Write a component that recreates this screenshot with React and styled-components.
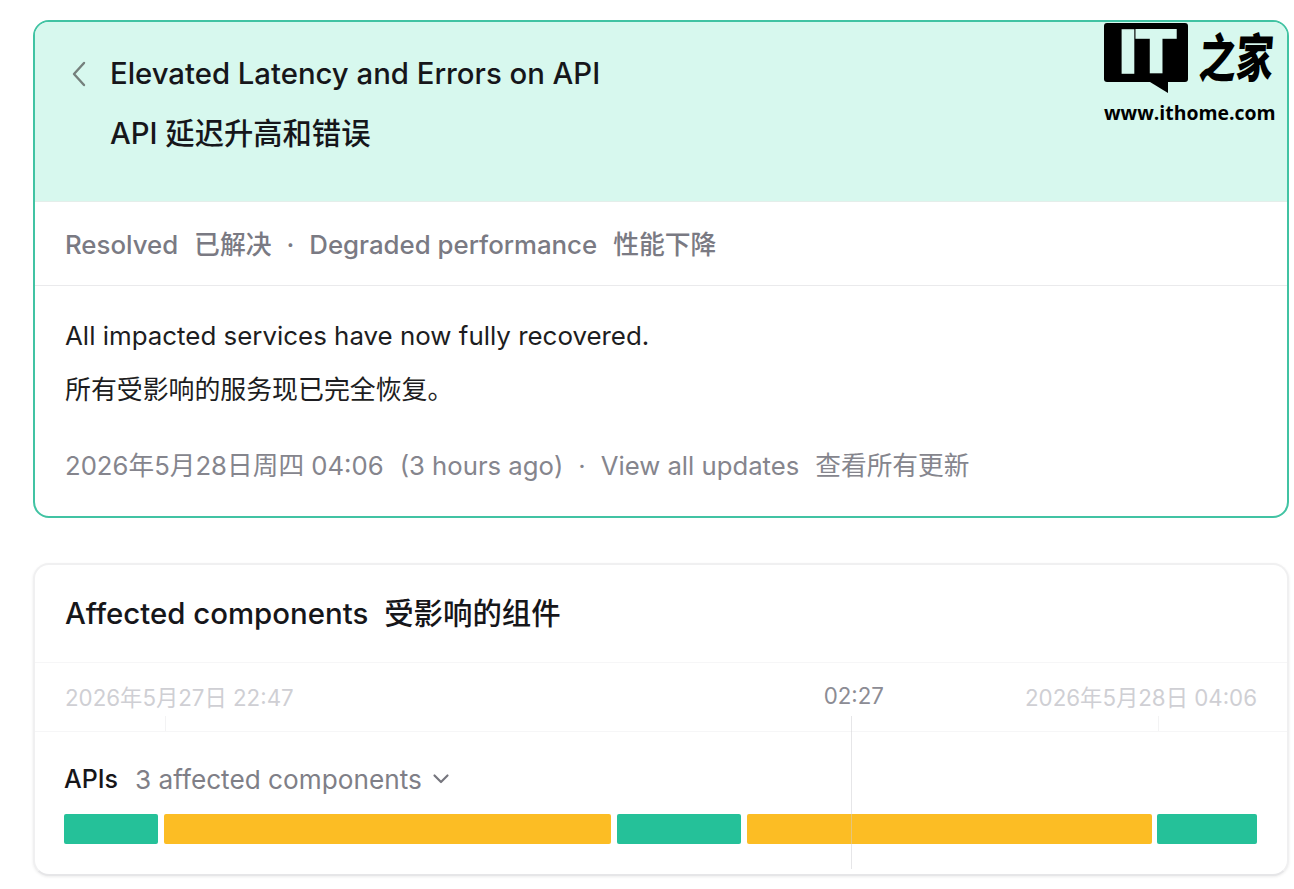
import styled, { createGlobalStyle } from "styled-components"

const GlobalStyle = createGlobalStyle`
    html, body {
        margin: 0;
        padding: 0;
        background: #fff;
    }
    body {
        font-family: Inter, "Noto Sans CJK SC", sans-serif;
    }
`

const bars = [
    { color: "#25c199", width: 94 },
    { color: "#fcbd24", width: 447 },
    { color: "#25c199", width: 124 },
    { color: "#fcbd24", width: 405 },
    { color: "#25c199", width: 100 },
]

function App() {
    return (
        <Page>
            <GlobalStyle />
            <IncidentCard>
                <Header>
                    <TitleRow>
                        <BackIcon width="16" height="26" viewBox="0 0 16 26" fill="none">
                            <path d="M13 2 L3 13 L13 24" stroke="#75807c" strokeWidth="2.4" strokeLinecap="round" strokeLinejoin="round" />
                        </BackIcon>
                        <Title>Elevated Latency and Errors on API</Title>
                    </TitleRow>
                    <SubTitle>API 延迟升高和错误</SubTitle>
                </Header>
                <StatusRow>
                    <span>Resolved</span>
                    <Zh>已解决</Zh>
                    <Dot>·</Dot>
                    <span>Degraded performance</span>
                    <Zh>性能下降</Zh>
                </StatusRow>
                <Body>
                    <Message>All impacted services have now fully recovered.</Message>
                    <Message $zh>所有受影响的服务现已完全恢复。</Message>
                    <MetaRow>
                        <span>2026年5月28日周四 04:06</span>
                        <Zh>(3 hours ago)</Zh>
                        <Dot>·</Dot>
                        <span>View all updates</span>
                        <Zh>查看所有更新</Zh>
                    </MetaRow>
                </Body>
            </IncidentCard>

            <ComponentsCard>
                <CardTitle>
                    <span>Affected components</span>
                    <Zh>受影响的组件</Zh>
                </CardTitle>
                <TimeRow>
                    <TimeLabel>2026年5月27日 22:47</TimeLabel>
                    <TimeLabel $current>02:27</TimeLabel>
                    <TimeLabel $end>2026年5月28日 04:06</TimeLabel>
                    <Tick $left={130} />
                    <Tick $left={1123} />
                </TimeRow>
                <GroupSection>
                    <GroupLabel>
                        <GroupName>APIs</GroupName>
                        <GroupCount>3 affected components</GroupCount>
                        <svg width="18" height="12" viewBox="0 0 18 12" fill="none">
                            <path d="M2.5 2.5 L9 9 L15.5 2.5" stroke="#76767e" strokeWidth="2.2" strokeLinecap="round" strokeLinejoin="round" />
                        </svg>
                    </GroupLabel>
                    <BarRow>
                        {bars.map((bar, index) => (
                            <Bar key={index} $color={bar.color} $width={bar.width} />
                        ))}
                    </BarRow>
                </GroupSection>
                <NowLine />
            </ComponentsCard>

            <Logo>
                <LogoTop>
                    <LogoBubble>IT</LogoBubble>
                    <LogoHan>之家</LogoHan>
                </LogoTop>
                <LogoUrl>www.ithome.com</LogoUrl>
            </Logo>
        </Page>
    )
}

export default App

const Page = styled.div`
    position: relative;
    box-sizing: border-box;
    width: 1294px;
    height: 889px;
    padding: 20px 5px 0 33px;
    overflow: hidden;
    color: #16161a;
    background: #fff;
`

const IncidentCard = styled.section`
    box-sizing: border-box;
    height: 498px;
    border: 2px solid #41c3a3;
    border-radius: 16px;
    overflow: hidden;
    background: #fff;
`

const Header = styled.header`
    box-sizing: border-box;
    height: 180px;
    padding: 28px 0 0 36px;
    background: #d7f8ee;
    border-bottom: 1px solid #e4eeea;
`

const TitleRow = styled.div`
    display: flex;
    align-items: center;
    gap: 23px;
    height: 48px;
`

const BackIcon = styled.svg`
    flex: none;
`

const Title = styled.h1`
    margin: 0;
    font-size: 29.3px;
    line-height: 48px;
    font-weight: 500;
    white-space: nowrap;
`

const SubTitle = styled.h2`
    margin: 12px 0 0 39px;
    font-size: 29.3px;
    line-height: 48px;
    font-weight: 500;
    white-space: nowrap;
`

const StatusRow = styled.div`
    box-sizing: border-box;
    height: 84px;
    padding: 0 30px;
    font-size: 25.8px;
    line-height: 85px;
    font-weight: 500;
    color: #7a7a83;
    border-bottom: 1px solid #eaeaec;
    white-space: nowrap;
`

const Zh = styled.span`
    margin-left: 16px;
`

const Dot = styled.span`
    margin: 0 15px;
`

const Body = styled.div`
    padding: 29px 30px 0;
`

const Message = styled.p`
    margin: ${props => (props.$zh ? "12px" : "0")} 0 0;
    font-size: 25.9px;
    line-height: 42px;
    color: #1d1d21;
`

const MetaRow = styled.div`
    margin-top: 34px;
    font-size: 25.7px;
    line-height: 42px;
    color: #85858d;
    white-space: nowrap;
`

const ComponentsCard = styled.section`
    position: relative;
    box-sizing: border-box;
    height: 313px;
    margin-top: 45px;
    border: 2px solid #f0f0f1;
    border-bottom-color: #e6e6e8;
    border-radius: 16px;
    overflow: hidden;
    background: #fff;
    box-shadow: 0 1px 3px rgba(0, 0, 0, 0.08);
`

const CardTitle = styled.h3`
    box-sizing: border-box;
    height: 98px;
    margin: 0;
    padding: 0 30px;
    font-size: 29.4px;
    line-height: 97px;
    font-weight: 500;
    white-space: nowrap;
    border-bottom: 1px solid #f6f6f7;
`

const TimeRow = styled.div`
    position: relative;
    display: flex;
    align-items: center;
    box-sizing: border-box;
    height: 69px;
    padding: 0 30px 3px;
    border-bottom: 1px solid #f6f6f7;
`

const TimeLabel = styled.span`
    margin-left: ${props => (props.$current ? "530px" : props.$end ? "auto" : "0")};
    font-size: 22.3px;
    color: ${props => (props.$current ? "#8c8c94" : "#cfcfd4")};
    white-space: nowrap;
`

const Tick = styled.i`
    position: absolute;
    left: ${props => props.$left}px;
    bottom: 0;
    width: 1px;
    height: 15px;
    background: #f3f3f4;
`

const GroupSection = styled.div`
    padding: 25px 29px 0;
`

const GroupLabel = styled.div`
    display: flex;
    align-items: center;
    gap: 10px;
    height: 44px;
    font-size: 26.2px;
    white-space: nowrap;
`

const GroupName = styled.span`
    font-size: 25px;
    font-weight: 500;
    margin-right: 7px;
`

const GroupCount = styled.span`
    color: #7f7f87;
`

const BarRow = styled.div`
    display: flex;
    gap: 6px;
    margin-top: 13px;
`

const Bar = styled.div`
    flex: none;
    width: ${props => props.$width}px;
    height: 30px;
    border-radius: 2px;
    background: ${props => props.$color};

    &:nth-child(4) {
        margin-right: -1px;
    }
`

const NowLine = styled.i`
    position: absolute;
    left: 816px;
    top: 151px;
    bottom: 5px;
    width: 1px;
    background: rgba(205, 205, 210, 0.5);
`

const Logo = styled.div`
    position: absolute;
    left: 1104px;
    top: 23px;
    width: 172px;
`

const LogoTop = styled.div`
    display: flex;
    align-items: flex-start;
    height: 79px;
`

const LogoBubble = styled.div`
    position: relative;
    box-sizing: border-box;
    width: 84px;
    height: 59px;
    padding-left: 13px;
    border-radius: 3px;
    background: #000;
    color: #d7f8ee;
    font-family: "DejaVu Sans", sans-serif;
    font-size: 59px;
    font-weight: 700;
    line-height: 59px;
    letter-spacing: -3px;
    -webkit-text-stroke: 1.5px #d7f8ee;

    &::after {
        content: "";
        position: absolute;
        left: 46px;
        top: 59px;
        border-top: 11px solid #000;
        border-left: 18px solid transparent;
    }
`

const LogoHan = styled.div`
    margin: 0 0 0 12px;
    font-family: "Noto Sans CJK SC", sans-serif;
    font-size: 37px;
    font-weight: 900;
    line-height: 60px;
    color: #000;
    white-space: nowrap;
    transform: scaleY(1.4) skewX(-6deg);
    transform-origin: 50% 45%;
`

const LogoUrl = styled.div`
    font-family: "Open Sans", sans-serif;
    font-size: 19.4px;
    font-weight: 700;
    line-height: 22px;
    color: #000;
    white-space: nowrap;
`
